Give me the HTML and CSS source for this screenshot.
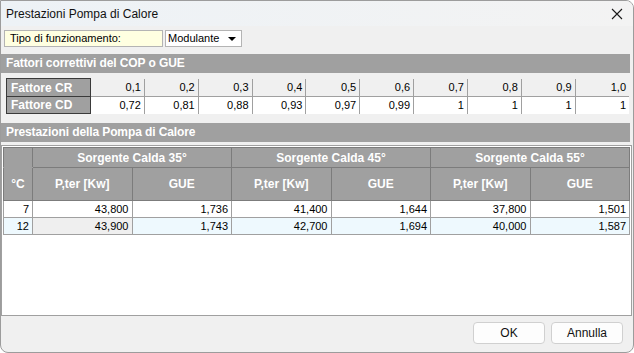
FILE: index.html
```html
<!DOCTYPE html>
<html>
	<head>
		<meta charset="utf-8">
		<title>Prestazioni Pompa di Calore</title>
		<link rel="stylesheet" href="styles.css">
	</head>
	<body>
		<div class="window">
			<div class="titlebar">
				<span class="title">Prestazioni Pompa di Calore</span>
				<svg class="close" width="12" height="12" viewBox="0 0 12 12"><path d="M1 1L11 11M11 1L1 11" stroke="#1a1a1a" stroke-width="1.1" fill="none"/></svg>
			</div>
			<div class="toolbar">
				<div class="label-box">Tipo di funzionamento:</div>
				<div class="select">Modulante<span class="arrow"></span></div>
			</div>
			<div class="section">Fattori correttivi del COP o GUE</div>
			<table class="factors">
				<tr class="r1">
					<th>Fattore CR</th>
					<td>0,1</td><td>0,2</td><td>0,3</td><td>0,4</td><td>0,5</td>
					<td>0,6</td><td>0,7</td><td>0,8</td><td>0,9</td><td>1,0</td>
				</tr>
				<tr class="r2">
					<th>Fattore CD</th>
					<td>0,72</td><td>0,81</td><td>0,88</td><td>0,93</td><td>0,97</td>
					<td>0,99</td><td>1</td><td>1</td><td>1</td><td>1</td>
				</tr>
			</table>
			<div class="section sec2">Prestazioni della Pompa di Calore</div>
			<div class="grid-wrap">
				<table class="grid">
					<colgroup>
						<col class="c0"><col class="c1"><col class="c1"><col class="c1"><col class="c1"><col class="c1"><col class="c1">
					</colgroup>
					<tr class="h1">
						<th class="deg-top"></th>
						<th colspan="2">Sorgente Calda 35°</th>
						<th colspan="2">Sorgente Calda 45°</th>
						<th colspan="2">Sorgente Calda 55°</th>
					</tr>
					<tr class="h2">
						<th class="deg">°C</th>
						<th>P,ter [Kw]</th><th>GUE</th>
						<th>P,ter [Kw]</th><th>GUE</th>
						<th>P,ter [Kw]</th><th>GUE</th>
					</tr>
					<tr>
						<td>7</td><td>43,800</td><td>1,736</td><td>41,400</td><td>1,644</td><td>37,800</td><td>1,501</td>
					</tr>
					<tr class="alt">
						<td>12</td><td class="focus">43,900</td><td>1,743</td><td>42,700</td><td>1,694</td><td>40,000</td><td>1,587</td>
					</tr>
				</table>
			</div>
			<div class="footer">
				<button class="btn">OK</button>
				<button class="btn">Annulla</button>
			</div>
		</div>
	</body>
</html>
```
FILE: styles.css
```css
*{margin: 0; padding: 0; box-sizing: border-box;}
body{background: #fff; font-family: "Liberation Sans", Arial, sans-serif;}
.window{width: 634px; height: 353px; border: 1px solid #9c9c9c; border-radius: 0 8px 8px 8px; background: #f0f0f0; overflow: hidden; display: flex; flex-direction: column;}
.titlebar{height: 25px; flex: none; display: flex; align-items: center; justify-content: space-between; padding: 0 10px 0 5px; background: linear-gradient(to right, #edf2f6, #f3f3f3);}
.title{font-size: 12px; color: #111;}
.close{display: block;}
.toolbar{flex: none; display: flex; gap: 2px; padding: 4px 0 0 3px;}
.label-box{width: 159px; height: 17px; background: #ffffe1; border: 1px solid #b4b4b4; font-size: 11px; line-height: 15px; padding-left: 5px;}
.select{width: 77px; height: 17px; background: #fff; border: 1px solid #b4b4b4; font-size: 11px; line-height: 15px; padding-left: 2px; position: relative;}
.arrow{position: absolute; right: 5px; top: 6px; border-left: 4px solid transparent; border-right: 4px solid transparent; border-top: 4px solid #000;}
.section{flex: none; margin: 7px 3px 0 0; height: 19px; background: #a0a0a0; color: #fff; font-weight: bold; font-size: 12px; line-height: 19px; padding-left: 5px; letter-spacing: -0.1px;}
.sec2{margin-top: 9px;}
.factors{flex: none; margin: 5px 0 0 5px; width: 623px; border-collapse: collapse; table-layout: fixed; font-size: 11px;}
.factors th{width: 84px; background: #a0a0a0; color: #fff; font-size: 12px; text-align: left; padding-left: 4px; border: 1px solid #3a3a3a;}
.factors td{text-align: right; padding-right: 3px; border-right: 1px solid #a0a0a0;}
.factors td:last-child{border-right: none;}
.factors .r1 th, .factors .r1 td{height: 18px;}
.factors .r2 th, .factors .r2 td{height: 17px;}
.factors .r2 td{background: #fff; border-top: 1px solid #a0a0a0;}
.grid-wrap{flex: 1; margin: 3px 1px 0 0; background: #fff; border: 1px solid #a0a0a0; padding: 1px 0 0 1px;}
.grid{border-collapse: collapse; table-layout: fixed; width: 626px; font-size: 11px;}
.grid .c0{width: 29px;}
.grid .c1{width: 99.5px;}
.grid th{background: #a0a0a0; color: #fff; font-size: 12px; font-weight: bold; border: 1px solid #7c7c7c; text-align: center;}
.grid .h1 th{height: 20px;}
.grid .h2 th{height: 33px;}
.grid .deg-top{border-bottom-color: #a0a0a0;}
.grid .deg{border-top-color: #a0a0a0;}
.grid td{height: 17px; text-align: right; padding-right: 3px; border: 1px solid #a0a0a0;}
.grid .alt td{background: #eef9fe;}
.grid .alt td.focus{background: #efefef;}
.footer{flex: none; height: 36px; display: flex; justify-content: flex-end; gap: 6px; padding: 6px 10px 0 0;}
.btn{width: 72px; height: 22px; background: #fdfdfd; border: 1px solid #d0d0d0; border-radius: 4px; font-family: "Liberation Sans", Arial, sans-serif; font-size: 12px; color: #111;}
```
